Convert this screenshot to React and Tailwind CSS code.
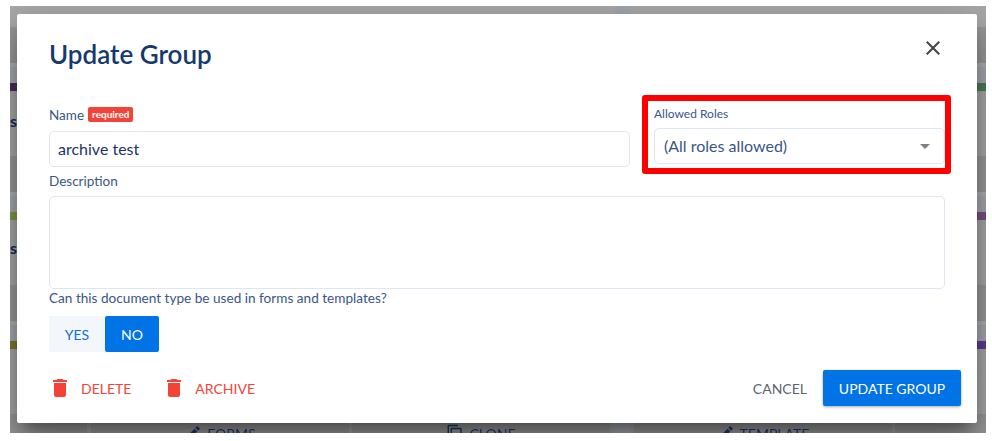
import React from "react";

const bands = [
    { left: "bg-[#4f2a66]", right: "bg-[#4f7f5c]", text: "pb-[6px]" },
    { left: "bg-[#7f9c42]", right: "bg-[#7d5485]", text: "pb-[9px]" },
    { left: "bg-[#7f7f25]", right: "bg-[#5f3f96]", text: "" },
];

function Pencil() {
    return (
        <svg viewBox="0 0 24 24" className="w-[18px] h-[18px] fill-[#1c3c74] mr-[5px]">
            <path d="M3 17.25V21h3.75L17.81 9.94l-3.75-3.75L3 17.25zM20.71 7.04c.39-.39.39-1.02 0-1.41l-2.34-2.34c-.39-.39-1.02-.39-1.41 0l-1.83 1.83 3.75 3.75 1.83-1.83z" />
        </svg>
    );
}

function CopyIcon() {
    return (
        <svg viewBox="0 0 24 24" className="w-[18px] h-[18px] fill-[#1c3c74] mr-[5px]">
            <path d="M16 1H4c-1.1 0-2 .9-2 2v14h2V3h12V1zm3 4H8c-1.1 0-2 .9-2 2v14c0 1.1.9 2 2 2h11c1.1 0 2-.9 2-2V7c0-1.1-.9-2-2-2zm0 16H8V7h11v14z" />
        </svg>
    );
}

function TrashIcon() {
    return (
        <svg viewBox="0 0 24 24" className="w-6 h-6 fill-[#f44336] shrink-0">
            <path d="M6 19c0 1.1.9 2 2 2h8c1.1 0 2-.9 2-2V7H6v12zM19 4h-3.5l-1-1h-5l-1 1H5v2h14V4z" />
        </svg>
    );
}

function CardFooter({ forms, clone, template }) {
    return (
        <div className="flex h-9 shrink-0 bg-[#9c9c9c] text-[#1c3c74] text-[14px]">
            <div className="w-[77px]" />
            <div className="w-[4px] bg-[#a6a6a6]" />
            <div className="w-[258px] flex items-center justify-center">{forms}</div>
            <div className="w-[3px] bg-[#a6a6a6]" />
            <div className="w-[258px] flex items-center justify-center">{clone}</div>
            <div className="w-[4px] bg-[#a6a6a6]" />
            <div className="w-[16px] bg-[#a5a9b0]" />
            <div className="w-[4px] bg-[#a6a6a6]" />
            <div className="w-[258px] flex items-center justify-center">{template}</div>
            <div className="w-[3px] bg-[#a6a6a6]" />
        </div>
    );
}

function Background() {
    return (
        <div className="flex flex-col h-full font-['Lato',sans-serif]">
            <div className="flex h-[21px] shrink-0 bg-[#ababab]">
                <div className="w-[604px]" />
                <div className="w-[16px] bg-[#a5a9b0]" />
            </div>
            {bands.map((band, i) => (
                <div key={i} className="flex flex-col shrink-0">
                    <CardFooter />
                    <div className="h-1 bg-[#b4b4b4]" />
                    <div className="h-4 bg-[#a9adb4]" />
                    <div className="flex h-2">
                        <div className={`w-[78px] ${band.left}`} />
                        <div className="flex-1" />
                        <div className={`w-[91px] ${band.right}`} />
                    </div>
                    <div className={`h-[65px] bg-[#ababab] flex items-center text-[#14285c] font-bold text-[16px] leading-none ${band.text}`}>
                        {i < 2 ? <span>s</span> : null}
                    </div>
                </div>
            ))}
            <CardFooter
                forms={<span className="flex items-center pt-[2px]"><Pencil />FORMS</span>}
                clone={<span className="flex items-center pt-[2px]"><CopyIcon />CLONE</span>}
                template={<span className="flex items-center pt-[2px]"><Pencil />TEMPLATE</span>}
            />
        </div>
    );
}

export default function App() {
    return (
        <div className="w-[992px] h-[441px] bg-white pt-[6px] pl-[10px] overflow-hidden">
            <div className="relative w-[976px] h-[427px] overflow-hidden">
                <Background />

                <div className="absolute left-[7px] top-2 w-[960px] h-[409px] bg-white rounded-[2px] font-['Lato',sans-serif] shadow-[0_11px_15px_-7px_rgba(0,0,0,0.4),0_24px_38px_3px_rgba(0,0,0,0.2),0_9px_46px_8px_rgba(0,0,0,0.14)]">
                    <div className="px-8 pt-[22px]">
                        <div className="flex items-start justify-between h-9">
                            <h1 className="text-[26px] font-semibold leading-9 text-[#143a6e]">Update Group</h1>
                            <svg viewBox="0 0 24 24" className="w-6 h-6 fill-[#444444]">
                                <path d="M19 6.41L17.59 5 12 10.59 6.41 5 5 6.41 10.59 12 5 17.59 6.41 19 12 13.41 17.59 19 19 17.59 13.41 12z" />
                            </svg>
                        </div>

                        <div className="flex items-start h-[79px] mt-[23px]">
                            <div className="w-[581px] pt-3">
                                <div className="flex items-center h-4 text-[13.5px] text-[#3a5688]">
                                    <span>Name</span>
                                    <span className="ml-[4px] h-[15px] px-[4px] bg-[#f44336] text-white text-[10px] font-bold leading-[14px] rounded-[2px] -mt-px">required</span>
                                </div>
                                <div className="mt-2 h-9 w-full border border-[#dfe6f1] rounded-[5px] px-2 flex items-center text-[16px] text-[#1c3468]">
                                    archive test
                                </div>
                            </div>
                            <div className="ml-3 w-[309px] h-[79px] shrink-0 border-[6px] border-[#ff0000] rounded-[3px] pl-[6px] -mr-[6px]">
                                <div className="h-[27px] pt-[5px] text-[12px] leading-4 text-[#3a5688]">Allowed Roles</div>
                                <div className="h-9 border border-[#dfe6f1] rounded-[5px] pl-[9px] pr-[7px] flex items-center justify-between text-[16px] text-[#3a5688]">
                                    <span>(All roles allowed)</span>
                                    <svg viewBox="0 0 24 24" className="w-6 h-6 fill-[#808080]">
                                        <path d="M7 10l5 5 5-5z" />
                                    </svg>
                                </div>
                            </div>
                        </div>

                        <div className="-mt-px text-[13.5px] leading-4 text-[#3a5688]">Description</div>
                        <div className="mt-[7px] h-[93px] border border-[#dfe6f1] rounded-[5px]" />
                        <div className="text-[13.6px] leading-4 pt-px h-[17px] text-[#3a5688]">Can this document type be used in forms and templates?</div>

                        <div className="flex mt-[10px] h-9 w-[110px] text-[14px]">
                            <div className="w-14 flex items-center justify-center bg-[#f3f7fc] text-[#0a6fe0] rounded-l-[2px]">YES</div>
                            <div className="w-[54px] flex items-center justify-center bg-[#0073e6] text-white rounded-[2px]">NO</div>
                        </div>

                        <div className="flex items-center justify-between h-9 mt-[18px] -mr-4 -ml-px">
                            <div className="flex items-center text-[14px] text-[#f44336]">
                                <TrashIcon />
                                <span className="ml-[9px]">DELETE</span>
                                <span className="ml-[31px]"><TrashIcon /></span>
                                <span className="ml-[9px]">ARCHIVE</span>
                            </div>
                            <div className="flex items-center text-[14px]">
                                <span className="text-[#5a6472]">CANCEL</span>
                                <div className="ml-4 w-[138px] h-9 flex items-center justify-center bg-[#0073e6] text-white rounded-[2px] shadow-[0_1px_3px_rgba(0,0,0,0.35)]">UPDATE GROUP</div>
                            </div>
                        </div>
                    </div>
                </div>
            </div>
        </div>
    );
}
